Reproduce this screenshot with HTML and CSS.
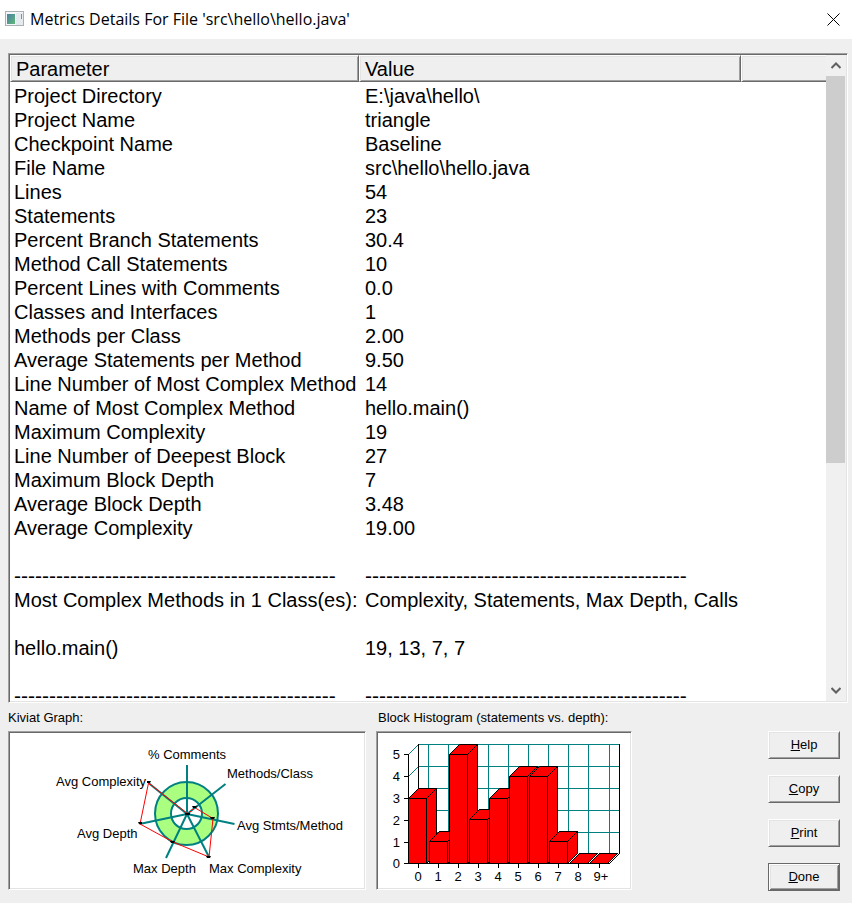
FILE: index.html
```
<!DOCTYPE html>
<html lang="en">

<head>
    <meta charset="utf-8">
    <title>Metrics Details For File 'src\hello\hello.java'</title>
    <meta name="viewport" content="width=device-width, initial-scale=1.0">
    <link rel="stylesheet" href="styles.css">
</head>

<body>
    <header class="title-bar">
        <svg class="app-icon" width="20" height="16" viewBox="0 0 20 16">
            <defs>
                <linearGradient id="screen" x1="0" y1="0" x2="1" y2="1">
                    <stop offset="0" stop-color="#4a7fa5" />
                    <stop offset="1" stop-color="#5fb878" />
                </linearGradient>
            </defs>
            <rect x="0.5" y="0.5" width="18" height="14" fill="#f4f6f8" stroke="#a9b0b6" />
            <rect x="2" y="3" width="8" height="10" fill="url(#screen)" />
            <rect x="11" y="2" width="7" height="12" fill="#e4eaee" />
            <rect x="16" y="3" width="1" height="5" fill="#5f9db0" />
        </svg>
        <h1>Metrics Details For File 'src\hello\hello.java'</h1>
        <button class="close" aria-label="Close">
            <svg width="13" height="13" viewBox="0 0 13 13">
                <path d="M0.5 0.5L12.5 12.5M12.5 0.5L0.5 12.5" stroke="#000" fill="none" />
            </svg>
        </button>
    </header>

    <main>
        <div class="list">
            <div class="list-view">
                <table>
                    <colgroup>
                        <col class="col-param">
                        <col class="col-value">
                        <col>
                    </colgroup>
                    <thead>
                        <tr><th>Parameter</th><th>Value</th><th></th></tr>
                    </thead>
                    <tbody>
                        <tr><td>Project Directory</td><td>E:\java\hello\</td></tr>
                        <tr><td>Project Name</td><td>triangle</td></tr>
                        <tr><td>Checkpoint Name</td><td>Baseline</td></tr>
                        <tr><td>File Name</td><td>src\hello\hello.java</td></tr>
                        <tr><td>Lines</td><td>54</td></tr>
                        <tr><td>Statements</td><td>23</td></tr>
                        <tr><td>Percent Branch Statements</td><td>30.4</td></tr>
                        <tr><td>Method Call Statements</td><td>10</td></tr>
                        <tr><td>Percent Lines with Comments</td><td>0.0</td></tr>
                        <tr><td>Classes and Interfaces</td><td>1</td></tr>
                        <tr><td>Methods per Class</td><td>2.00</td></tr>
                        <tr><td>Average Statements per Method</td><td>9.50</td></tr>
                        <tr><td>Line Number of Most Complex Method</td><td>14</td></tr>
                        <tr><td>Name of Most Complex Method</td><td>hello.main()</td></tr>
                        <tr><td>Maximum Complexity</td><td>19</td></tr>
                        <tr><td>Line Number of Deepest Block</td><td>27</td></tr>
                        <tr><td>Maximum Block Depth</td><td>7</td></tr>
                        <tr><td>Average Block Depth</td><td>3.48</td></tr>
                        <tr><td>Average Complexity</td><td>19.00</td></tr>
                        <tr><td></td><td></td></tr>
                        <tr class="rule"><td>----------------------------------------------</td><td>----------------------------------------------</td></tr>
                        <tr><td>Most Complex Methods in 1 Class(es):</td><td>Complexity, Statements, Max Depth, Calls</td></tr>
                        <tr><td></td><td></td></tr>
                        <tr><td>hello.main()</td><td>19, 13, 7, 7</td></tr>
                        <tr><td></td><td></td></tr>
                        <tr class="rule"><td>----------------------------------------------</td><td>----------------------------------------------</td></tr>
                    </tbody>
                </table>
            </div>
            <div class="scrollbar">
                <button class="arrow" aria-label="Scroll up">
                    <svg width="10" height="7" viewBox="0 0 10 7"><path d="M0.5 6L5 1.5L9.5 6" /></svg>
                </button>
                <div class="track"><div class="thumb"></div></div>
                <button class="arrow" aria-label="Scroll down">
                    <svg width="10" height="7" viewBox="0 0 10 7"><path d="M0.5 1L5 5.5L9.5 1" /></svg>
                </button>
            </div>
        </div>

        <div class="bottom">
            <section class="kiviat">
                <h2>Kiviat Graph:</h2>
                <div class="panel">
                    <svg width="354" height="155" viewBox="0 0 354 155">
                        <circle cx="176.5" cy="80.5" r="31" fill="#aaff80" />
                        <circle cx="176.5" cy="80.5" r="15" fill="#fff" />
                        <g fill="none" stroke="#008080" stroke-width="2">
                            <circle cx="176.5" cy="80.5" r="31.5" />
                            <circle cx="176.5" cy="80.5" r="15.5" />
                            <path d="M177 81V32M177 81L215.5 51M177 81L224.5 91M177 81L199 124M177 81L156 125M177 81L129.5 91M177 81L138.5 50" />
                        </g>
                        <polygon class="trace" points="178,81 184.5,74.5 203,85.5 199,124 163,109 130,91 138.5,50" />
                        <g class="marks">
                            <path d="M175 80h5v2h-5z" />
                            <path d="M182 73h5l-1 2h-3z" />
                            <path d="M200 84h5l-1 2h-3z" />
                            <path d="M196 123h5l-1 2h-3z" />
                            <path d="M160 108h5l-1 2h-3z" />
                            <path d="M128 89h4v2h-3z" />
                            <path d="M137 48h4l-1 2h-3z" />
                        </g>
                        <text x="138" y="26">% Comments</text>
                        <text x="217" y="45">Methods/Class</text>
                        <text x="227" y="97">Avg Stmts/Method</text>
                        <text x="199" y="140">Max Complexity</text>
                        <text x="123" y="140">Max Depth</text>
                        <text x="67" y="105">Avg Depth</text>
                        <text x="46" y="53">Avg Complexity</text>
                    </svg>
                </div>
            </section>

            <section class="histogram">
                <h2>Block Histogram (statements vs. depth):</h2>
                <div class="panel">
                    <svg width="252" height="155" viewBox="0 0 252 155">
                        <!-- back wall -->
                        <g class="wall">
                            <path d="M40.5 11.5H241.5M40.5 33.5H241.5M40.5 55.5H241.5M40.5 77.5H241.5M40.5 99.5H241.5" />
                            <path d="M50.5 11V121M70.5 11V121M90.5 11V121M110.5 11V121M130.5 11V121M150.5 11V121M170.5 11V121M190.5 11V121M210.5 11V121M231.5 11V121" />
                            <path d="M30.5 21.5L40.5 11.5M30.5 43.5L40.5 33.5" />
                        </g>
                        <!-- axes -->
                        <g class="axis">
                            <path d="M40.5 11V121M241.5 11V121M30.5 21V130.5H231.5L241.5 120.5" />
                            <path d="M26 21.5H31M26 43.5H31M26 65.5H31M26 87.5H31M26 109.5H31M26 130.5H31" />
                            <path d="M40.5 131V135M60.5 131V135M80.5 131V135M100.5 131V135M120.5 131V135M140.5 131V135M160.5 131V135M180.5 131V135M200.5 131V135M221.5 131V135" />
                        </g>
                        <!-- bars, left to right so each covers the side of the one before -->
                        <g class="bars">
                            <path d="M30.5 130.5V65.5L40.5 55.5H58.5V120.5L48.5 130.5zM30.5 65.5H48.5V130.5M48.5 65.5L58.5 55.5" />
                            <path d="M51.5 130.5V108.5L61.5 98.5H79.5V120.5L69.5 130.5zM51.5 108.5H69.5V130.5M69.5 108.5L79.5 98.5" />
                            <path d="M71.5 130.5V21.5L81.5 11.5H99.5V120.5L89.5 130.5zM71.5 21.5H89.5V130.5M89.5 21.5L99.5 11.5" />
                            <path d="M91.5 130.5V86.5L101.5 76.5H119.5V120.5L109.5 130.5zM91.5 86.5H109.5V130.5M109.5 86.5L119.5 76.5" />
                            <path d="M111.5 130.5V65.5L121.5 55.5H139.5V120.5L129.5 130.5zM111.5 65.5H129.5V130.5M129.5 65.5L139.5 55.5" />
                            <path d="M131.5 130.5V43.5L141.5 33.5H159.5V120.5L149.5 130.5zM131.5 43.5H149.5V130.5M149.5 43.5L159.5 33.5" />
                            <path d="M151.5 130.5V43.5L161.5 33.5H179.5V120.5L169.5 130.5zM151.5 43.5H169.5V130.5M169.5 43.5L179.5 33.5" />
                            <path d="M171.5 130.5V108.5L181.5 98.5H199.5V120.5L189.5 130.5zM171.5 108.5H189.5V130.5M189.5 108.5L199.5 98.5" />
                            <path d="M191.5 130.5L201.5 120.5H219.5L209.5 130.5z" />
                            <path d="M211.5 130.5L221.5 120.5H239.5L229.5 130.5z" />
                        </g>
                        <g text-anchor="end">
                            <text x="22" y="26">5</text>
                            <text x="22" y="48">4</text>
                            <text x="22" y="70">3</text>
                            <text x="22" y="92">2</text>
                            <text x="22" y="114">1</text>
                            <text x="22" y="135">0</text>
                        </g>
                        <g text-anchor="middle">
                            <text x="40" y="148">0</text>
                            <text x="60" y="148">1</text>
                            <text x="80" y="148">2</text>
                            <text x="100" y="148">3</text>
                            <text x="120" y="148">4</text>
                            <text x="140" y="148">5</text>
                            <text x="160" y="148">6</text>
                            <text x="180" y="148">7</text>
                            <text x="200" y="148">8</text>
                            <text x="223" y="148">9+</text>
                        </g>
                    </svg>
                </div>
            </section>

            <div class="buttons">
                <button><u>H</u>elp</button>
                <button><u>C</u>opy</button>
                <button><u>P</u>rint</button>
                <button class="default"><u>D</u>one</button>
            </div>
        </div>
    </main>
</body>

</html>
```

FILE: styles.css
```
* {
    box-sizing: border-box;
}

body {
    margin: 0;
    height: 100vh;
    display: flex;
    flex-direction: column;
    background: #efefef;
    color: #000;
    font-family: "Liberation Sans", Arial, sans-serif;
    font-size: 13px;
}

button {
    font-family: inherit;
    font-size: 13px;
    color: #000;
    padding: 0;
}

svg {
    display: block;
}

.title-bar {
    display: flex;
    align-items: center;
    height: 39px;
    padding: 0 12px 1px 5px;
    background: #fff;
}

.title-bar h1 {
    flex: 1;
    margin: 0 0 0 5px;
    font-family: "Open Sans", "Noto Sans", sans-serif;
    font-size: 16px;
    line-height: 20px;
    font-weight: normal;
    white-space: nowrap;
}

.close {
    border: none;
    background: none;
}

main {
    flex: 1;
    min-height: 0;
    display: flex;
    flex-direction: column;
    padding: 14px 4px 12px 8px;
}

/* sunken frames */
.list,
.panel {
    background: #fff;
    border: 1px solid;
    border-color: #a0a0a0 #fff #fff #a0a0a0;
    box-shadow: inset 1px 1px #696969, inset -1px -1px #e3e3e3;
    padding: 1px;
}

.list {
    flex: 1;
    min-height: 0;
    display: flex;
}

.list-view {
    flex: 1;
    min-width: 0;
    overflow: hidden;
}

table {
    width: 100%;
    table-layout: fixed;
    border-collapse: separate;
    border-spacing: 0;
    font-size: 20px;
    line-height: 24px;
}

.col-param {
    width: 349px;
}

.col-value {
    width: 382px;
}

th {
    height: 27px;
    padding: 1px 0 0 5px;
    line-height: 24px;
    text-align: left;
    font-weight: normal;
    background: #efefef;
    border: 1px solid;
    border-color: #fff #696969 #696969 #fff;
    box-shadow: inset 1px 1px #e3e3e3, inset -1px -1px #a0a0a0;
}

th:last-child {
    border-right: none;
    box-shadow: inset 1px 1px #e3e3e3, inset 0 -1px #a0a0a0;
}

td {
    height: 24px;
    padding: 0 0 0 4px;
    white-space: nowrap;
}

td + td {
    padding-left: 6px;
}

.rule {
    font-size: 21px;
}

tbody::before {
    content: "";
    display: block;
    height: 2px;
}

.scrollbar {
    display: flex;
    flex-direction: column;
    width: 20px;
    background: #f0f0f0;
}

.arrow {
    display: flex;
    align-items: center;
    justify-content: center;
    height: 21px;
    border: none;
    background: none;
}

.arrow path {
    fill: none;
    stroke: #606060;
    stroke-width: 2;
}

.track {
    flex: 1;
}

.thumb {
    width: 19px;
    height: 64%;
    background: #cdcdcd;
}

.bottom {
    display: flex;
    gap: 10px;
    padding-top: 7px;
}

.bottom h2 {
    margin: 0;
    font-size: 13px;
    font-weight: normal;
    line-height: 15px;
    padding-bottom: 6px;
}

.histogram h2 {
    padding-left: 2px;
}

.panel {
    height: 159px;
}

.panel text {
    font-size: 13px;
    fill: #000;
}

.trace {
    fill: none;
    stroke: #f00;
}

.marks {
    fill: #000;
}

.wall,
.axis,
.bars {
    fill: none;
    stroke: #000;
    shape-rendering: crispEdges;
}

.wall {
    stroke: #008080;
}

.bars {
    fill: #f00;
}

.buttons {
    display: flex;
    flex-direction: column;
    gap: 16px;
    margin-left: auto;
    padding: 21px 8px 0 0;
}

.buttons button {
    width: 72px;
    height: 28px;
    padding-bottom: 1px;
    background: #efefef;
    border: 1px solid;
    border-color: #fff #696969 #696969 #fff;
    box-shadow: inset 1px 1px #e3e3e3, inset -1px -1px #a0a0a0;
}

.buttons .default {
    border-color: #696969;
    box-shadow: inset 1px 1px #fff, inset -1px -1px #696969, inset 2px 2px #e3e3e3, inset -2px -2px #a0a0a0;
}
```
